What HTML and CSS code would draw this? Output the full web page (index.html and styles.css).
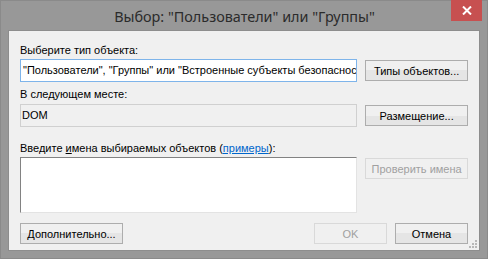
FILE: index.html
```html
<!DOCTYPE html>
<html lang="ru">
<head>
<meta charset="utf-8">
<title>Выбор</title>
<link rel="stylesheet" href="styles.css">
</head>
<body>
<div class="window">
  <div class="titlebar">
    <span class="title">Выбор: "Пользователи" или "Группы"</span>
    <div class="close">
      <svg width="10" height="9" viewBox="0 0 10 9"><path d="M1 0.5 L9 8.5 M9 0.5 L1 8.5" stroke="#fff" stroke-width="2"/></svg>
    </div>
  </div>
  <div class="client">
    <div class="label first">Выберите тип объекта:</div>
    <div class="row">
      <div class="field focused">"Пользователи", "Группы" или "Встроенные субъекты безопасности"</div>
      <div class="btn">Типы объектов...</div>
    </div>
    <div class="label">В следующем месте:</div>
    <div class="row">
      <div class="field readonly">DOM</div>
      <div class="btn">Размещение...</div>
    </div>
    <div class="label third">Введите <u>и</u>мена выбираемых объектов (<a class="link">примеры</a>):</div>
    <div class="row top">
      <div class="textarea"></div>
      <div class="btn disabled">Проверить имена</div>
    </div>
    <div class="footer">
      <div class="btn">Дополнительно...</div>
      <div class="spacer"></div>
      <div class="btn small disabled">OK</div>
      <div class="btn small">Отмена</div>
    </div>
    <div class="grip">
      <i></i><i></i><i></i><i></i><i></i><i></i>
    </div>
  </div>
</div>
</body>
</html>
```
FILE: styles.css
```css
* { box-sizing: border-box; }
html, body { margin: 0; padding: 0; }
body { width: 488px; height: 259px; overflow: hidden; background: #989898; }

.window {
  width: 488px;
  height: 259px;
  background: #989898;
  border: 1px solid #8a8a8a;
  display: flex;
  flex-direction: column;
  padding: 0 7px 7px 7px;
  font-family: "Liberation Sans", Arial, sans-serif;
  font-size: 11px;
  color: #000;
}

.titlebar {
  position: relative;
  height: 29px;
  flex: none;
  display: flex;
  justify-content: center;
  align-items: center;
}
.title {
  font-family: "Noto Sans", "Open Sans", sans-serif;
  font-size: 14.4px;
  color: #2b2b2b;
  padding-top: 2px;
  margin-left: 1px;
}
.close {
  position: absolute;
  top: -1px;
  right: -2px;
  width: 31px;
  height: 21px;
  background: #c75050;
  display: flex;
  align-items: center;
  justify-content: center;
}

.client {
  position: relative;
  flex: 1;
  background: #f0f0f0;
  border: 1px solid #8d8d8d;
  padding: 0 11px 0 11px;
  display: flex;
  flex-direction: column;
}

.label { height: 13px; line-height: 13px; white-space: nowrap; }
.label.first { margin-top: 13px; margin-bottom: 2px; }
.label { margin-top: 6px; margin-bottom: 3px; }
.label.third { margin-top: 15px; margin-bottom: 2px; }

.row { display: flex; align-items: center; gap: 8px; }
.row.top { align-items: flex-start; }

.field {
  width: 338px;
  height: 23px;
  border: 1px solid #abadb3;
  padding: 0 2px;
  line-height: 21px;
  white-space: nowrap;
  overflow: hidden;
  background: #fff;
}
.field.focused { border-color: #7eb4ea; }
.field.readonly { background: #f0f0f0; border-color: #d0d0d0; padding-left: 1px; }

.textarea {
  width: 338px;
  height: 56px;
  background: #fff;
  border-style: solid;
  border-width: 1px;
  border-color: #828282 #e3e3e3 #e3e3e3 #828282;
}

.btn {
  width: 103px;
  height: 21px;
  border: 1px solid #adadad;
  background: linear-gradient(#f0f0f0, #f0f0f0 50%, #e5e5e5 50%, #e5e5e5);
  display: flex;
  align-items: center;
  justify-content: center;
  white-space: nowrap;
}
.row.top .btn { margin-top: 1px; }
.btn.disabled { color: #a0a0a0; border-color: #d9d9d9; background: #f0f0f0; }
.btn.small { width: 73px; }

.link { color: #0066cc; text-decoration: underline; }

.footer {
  display: flex;
  gap: 8px;
  margin-top: 10px;
}
.spacer { flex: 1; }

.grip {
  position: absolute;
  right: 2px;
  bottom: 2px;
  width: 8px;
  height: 8px;
}
.grip i {
  position: absolute;
  width: 2px;
  height: 2px;
  background: #b8b8b8;
}
.grip i:nth-child(1) { right: 0; bottom: 0; }
.grip i:nth-child(2) { right: 3px; bottom: 0; }
.grip i:nth-child(3) { right: 6px; bottom: 0; }
.grip i:nth-child(4) { right: 0; bottom: 3px; }
.grip i:nth-child(5) { right: 3px; bottom: 3px; }
.grip i:nth-child(6) { right: 0; bottom: 6px; }
```
